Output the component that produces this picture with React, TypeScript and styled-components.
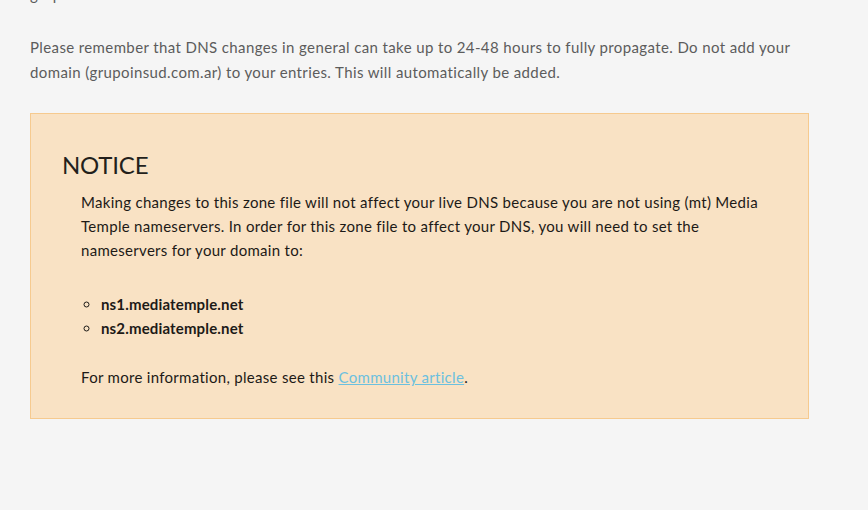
import React from 'react';
import styled, { createGlobalStyle } from 'styled-components';

const GlobalStyle = createGlobalStyle`
  html, body {
    margin: 0;
    padding: 0;
    background: #f5f5f5;
  }
  body {
    font-family: Lato, "Open Sans", sans-serif;
    -webkit-font-smoothing: antialiased;
  }
`;

const nameservers = ['ns1.mediatemple.net', 'ns2.mediatemple.net'];

const App = () => {
  return (
    <>
      <GlobalStyle />
      <Page>
        <Intro>grupoinsud.com.ar</Intro>
        <Intro>
          Please remember that DNS changes in general can take up to 24-48 hours to fully propagate. Do not add your
          <br />
          domain (grupoinsud.com.ar) to your entries. This will automatically be added.
        </Intro>
        <Notice>
          <NoticeTitle>NOTICE</NoticeTitle>
          <NoticeBody>
            <Text>
              Making changes to this zone file will not affect your live DNS because you are not using (mt) Media
              <br />
              Temple nameservers. In order for this zone file to affect your DNS, you will need to set the
              <br />
              nameservers for your domain to:
            </Text>
            <ServerList>
              {nameservers.map(ns => (
                <Server key={ns}>{ns}</Server>
              ))}
            </ServerList>
            <Text>
              For more information, please see this <Link href="#">Community article</Link>.
            </Text>
          </NoticeBody>
        </Notice>
      </Page>
    </>
  );
};

export default App;

const Page = styled.div`
  padding: 0 58px 0 30px;
  height: 510px;
  overflow: hidden;
`;

const Intro = styled.p`
  margin: 0 0 28px;
  font-size: 15px;
  line-height: 25px;
  letter-spacing: 0.38px;
  color: #5c5c5c;
  white-space: nowrap;

  &:first-child {
    margin-top: -18px;
  }
`;

const Notice = styled.section`
  margin-top: 25px;
  width: 779px;
  box-sizing: border-box;
  background: #f9e2c4;
  border: 1px solid #f6ca8f;
  padding: 36px 31px 29px;
`;

const NoticeTitle = styled.h2`
  margin: 0 0 10px;
  font-size: 24px;
  font-weight: 400;
  line-height: 30px;
  color: #231f1c;
  letter-spacing: -0.2px;
`;

const NoticeBody = styled.div`
  padding-left: 19px;
`;

const Text = styled.p`
  margin: 0;
  font-size: 15px;
  line-height: 24px;
  letter-spacing: 0.3px;
  color: #1d1a17;
  white-space: nowrap;
`;

const ServerList = styled.ul`
  margin: 30px 0 25px;
  padding: 0 0 0 20px;
  list-style: circle;
`;

const Server = styled.li`
  font-size: 15px;
  line-height: 24px;
  font-weight: 700;
  letter-spacing: 0.15px;
  color: #1d1a17;
`;

const Link = styled.a`
  color: #6cc0df;
  text-decoration: underline;
`;
